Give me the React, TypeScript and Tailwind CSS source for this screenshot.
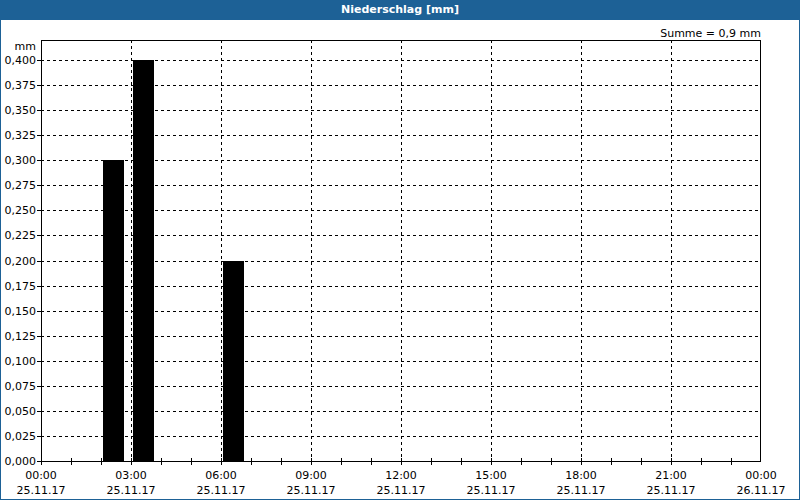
export default function App() {
  const ys = Array.from({ length: 17 }, (_, i) => i);
  const xs = Array.from({ length: 9 }, (_, i) => i);
  const times = ["00:00","03:00","06:00","09:00","12:00","15:00","18:00","21:00","00:00"];
  const yOf = (v: number) => 461 - v * 1002.5;
  const bars = [
    { x: 103, v: 0.3 },
    { x: 133, v: 0.4 },
    { x: 223, v: 0.2 },
  ];
  return (
    <div className="w-[800px] h-[500px] flex flex-col bg-white border-x border-b border-[#1d6196]" style={{ fontFamily: "'DejaVu Sans', sans-serif" }}>
      <div className="h-[20px] bg-[#1d6196] text-white text-[11px] font-bold flex items-center justify-center shrink-0">Niederschlag [mm]</div>
      <svg width="798" height="479" viewBox="1 20 798 479" className="block">
        <g fontSize="11" fontFamily="'DejaVu Sans', sans-serif" fill="#000">
          <text x="761" y="37" textAnchor="end">Summe = 0,9 mm</text>
          <text x="36" y="50" textAnchor="end">mm</text>
          {ys.map((i) => {
            const y = 461 - i * 25.06;
            return (
              <g key={i}>
                {i > 0 && <line x1="41" x2="760" y1={Math.round(y) + 0.5} y2={Math.round(y) + 0.5} stroke="#000" strokeDasharray="3 3" />}
                <line x1="37" x2="41" y1={Math.round(y) + 0.5} y2={Math.round(y) + 0.5} stroke="#000" />
                <text x="36" y={Math.round(y) + 4} textAnchor="end">{(i * 0.025).toFixed(3).replace(".", ",")}</text>
              </g>
            );
          })}
          {xs.map((i) => {
            const x = 41 + i * 90;
            return (
              <g key={i}>
                {i > 0 && i < 8 && <line x1={x + 0.5} x2={x + 0.5} y1="40" y2="461" stroke="#000" strokeDasharray="3 3" />}
                <text x={x} y="479" textAnchor="middle">{times[i]}</text>
                <text x={x} y="494" textAnchor="middle">{i === 8 ? "26.11.17" : "25.11.17"}</text>
              </g>
            );
          })}
          {Array.from({ length: 24 }, (_, i) => (
            <line key={i} x1={41 + i * 30 + 0.5} x2={41 + i * 30 + 0.5} y1="458" y2="465" stroke="#000" />
          ))}
          {bars.map((b) => (
            <rect key={b.x} x={b.x} y={Math.round(yOf(b.v))} width="21" height={461 - Math.round(yOf(b.v))} fill="#000" />
          ))}
          <rect x="41.5" y="40.5" width="719" height="421" fill="none" stroke="#000" />
        </g>
      </svg>
    </div>
  );
}
